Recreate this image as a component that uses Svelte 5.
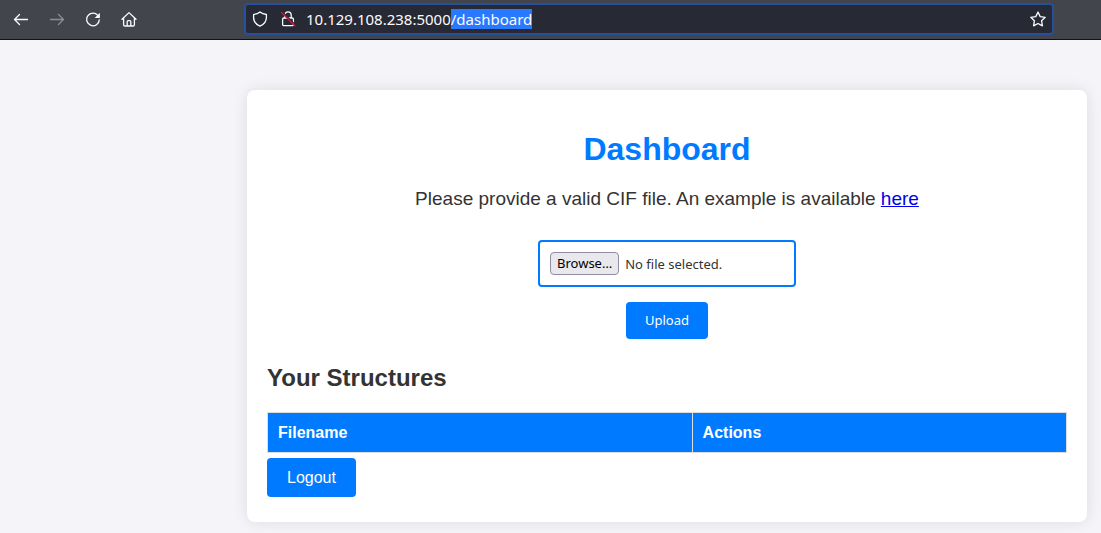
<script>
  import { onMount } from 'svelte';

  let address = $state('10.129.108.238:5000/dashboard');
  let fileName = $state('');
  let addressField;

  onMount(() => {
    addressField.focus();
    addressField.setSelectionRange(address.indexOf('/'), address.length);
  });

  function pick(event) {
    fileName = event.currentTarget.files[0]?.name ?? '';
  }
</script>

<header class="toolbar">
  <nav class="nav" aria-label="Browser">
    <button type="button" aria-label="Back">
      <svg viewBox="0 0 16 16"><path d="M14.500 8.500H1.500M6.500 3.500L1.500 8.500L6.500 13.500" /></svg>
    </button>
    <button type="button" aria-label="Forward" disabled>
      <svg viewBox="0 0 16 16"><path d="M1.500 8.500H14.500M9.500 3.500L14.500 8.500L9.500 13.500" /></svg>
    </button>
    <button type="button" aria-label="Reload">
      <svg viewBox="0 0 16 16">
        <path d="M12.800 4.400A6.300 6.300 0 1 0 14.300 8.900" />
        <path class="solid" d="M14.900 1.800V7H9.700Z" />
      </svg>
    </button>
    <button type="button" aria-label="Home">
      <svg viewBox="0 0 16 16">
        <path d="M1 8.300L8 1.600L15 8.300M2.600 7.100V13.700Q2.600 15 3.900 15H12.100Q13.400 15 13.400 13.700V7.100M6.200 14.800V10.600Q6.200 9.600 7.200 9.600H8.800Q9.800 9.600 9.800 10.600V14.800" />
      </svg>
    </button>
  </nav>
  <div class="address">
    <svg viewBox="0 0 16 16"><path d="M8 1C6.200 2.600 3.900 3.300 1.600 3.500V6.500C1.600 10.600 4.300 13.500 8 15.100C11.700 13.500 14.400 10.600 14.400 6.500V3.500C12.100 3.300 9.800 2.600 8 1Z" /></svg>
    <svg class="lock" viewBox="0 0 16 16">
      <path d="M4.800 7V4A3.200 3.200 0 0 1 11.200 4V7M3.800 7H12.200Q13.400 7 13.400 8.200V13.500Q13.400 14.700 12.200 14.700H3.800Q2.600 14.700 2.600 13.500V8.200Q2.600 7 3.800 7Z" />
      <path class="gap" d="M2.500 1L15.500 14" />
      <path class="slash" d="M1.500 1.500L14.800 14.800" />
    </svg>
    <input type="text" aria-label="Address" spellcheck="false" bind:value={address} bind:this={addressField} />
    <button type="button" aria-label="Bookmark">
      <svg viewBox="0 0 16 16"><path d="M8 1.100L10.200 5.600L15.200 6.300L11.600 9.800L12.400 14.800L8 12.500L3.600 14.800L4.400 9.800L0.800 6.300L5.800 5.600Z" /></svg>
    </button>
  </div>
</header>

<main class="card">
  <h1>Dashboard</h1>
  <p>Please provide a valid CIF file. An example is available <a href="#example">here</a></p>
  <form onsubmit={(event) => event.preventDefault()}>
    <label class="file">
      <span class="browse">Browse…</span>
      <span>{fileName || 'No file selected.'}</span>
      <input type="file" accept=".cif" onchange={pick} />
    </label>
    <button type="submit" class="upload">Upload</button>
  </form>
  <h2>Your Structures</h2>
  <table>
    <thead>
      <tr><th scope="col">Filename</th><th scope="col">Actions</th></tr>
    </thead>
  </table>
  <a class="logout" href="#logout">Logout</a>
</main>

<style>
  :global(body) {
    background: #f4f4f9;
    color: #333;
    font-family: 'Liberation Sans', Arial, sans-serif;
  }

  .toolbar {
    display: flex;
    align-items: center;
    height: 38px;
    padding: 0 47px 1px 0;
    background: #42454c;
    border-bottom: 1px solid #101116;
  }

  .nav {
    display: flex;
    flex: 0 0 244px;
    gap: 20px;
    padding-left: 13px;
    box-sizing: border-box;
  }

  svg {
    display: block;
    width: 16px;
    height: 16px;
    fill: none;
    stroke: #fbfbfe;
    stroke-width: 1.3;
    stroke-linecap: round;
    stroke-linejoin: round;
  }

  .solid {
    fill: #fbfbfe;
    stroke: none;
  }

  .toolbar button {
    padding: 0;
    border: 0;
    background: none;
  }

  .toolbar button:disabled {
    opacity: 0.4;
  }

  .address {
    display: flex;
    flex: 1;
    align-items: center;
    height: 32px;
    padding: 0 6px;
    box-sizing: border-box;
    background: #272a35;
    border: 2px solid #264f9c;
    border-radius: 4px;
  }

  .address .lock {
    margin-left: 12px;
  }

  .lock .gap {
    stroke: #272a35;
  }

  .lock .slash {
    stroke: #e3103f;
  }

  .address input {
    flex: 1;
    min-width: 0;
    margin: 0 0 0 10px;
    padding: 0;
    border: 0;
    outline: 0;
    background: none;
    color: #fbfbfe;
    caret-color: transparent;
    font: 15px 'Noto Sans', sans-serif;
  }

  .address input::selection {
    background: #2979ff;
    color: #fbfbfe;
  }

  .card {
    margin: 50px 14px 11px 247px;
    padding: 20px 20px 25px;
    background: #fff;
    border-radius: 8px;
    box-shadow: 0 0 15px rgba(0, 0, 0, 0.1);
  }

  h1 {
    margin: 20px 0;
    color: #007bff;
    font-size: 32px;
    line-height: 38px;
    text-align: center;
  }

  p {
    margin: 0 0 30px;
    font-size: 19px;
    line-height: 22px;
    text-align: center;
  }

  p a {
    color: #0000ee;
  }

  form {
    display: flex;
    flex-direction: column;
    align-items: center;
    gap: 15px;
    font: 13px 'Noto Sans', sans-serif;
  }

  .file {
    position: relative;
    display: flex;
    align-items: center;
    gap: 6px;
    width: 258px;
    height: 47px;
    padding: 0 10px;
    box-sizing: border-box;
    border: 2px solid #007bff;
    border-radius: 4px;
  }

  .file input {
    position: absolute;
    inset: 0;
    width: 100%;
    opacity: 0;
  }

  .browse {
    padding: 2px 6px;
    background: #e9e9ed;
    border: 1px solid #8f8f9d;
    border-radius: 4px;
    color: #000;
    line-height: 17px;
  }

  .upload {
    padding: 10px 19px;
    border: 0;
    border-radius: 4px;
    background: #007bff;
    color: #fff;
    font: inherit;
    line-height: 17px;
  }

  h2 {
    margin: 25px 0 20px;
    font-size: 24px;
    line-height: 28px;
  }

  table {
    width: 100%;
    border-collapse: collapse;
  }

  th {
    padding: 10px;
    border: 1px solid #ddd;
    background: #007bff;
    color: #fff;
    font-size: 16px;
    line-height: 19px;
    text-align: left;
  }

  .logout {
    display: inline-block;
    margin-top: 5px;
    padding: 10px 20px;
    border-radius: 4px;
    background: #007bff;
    color: #fff;
    font-size: 16px;
    line-height: 19px;
    text-decoration: none;
  }
</style>
